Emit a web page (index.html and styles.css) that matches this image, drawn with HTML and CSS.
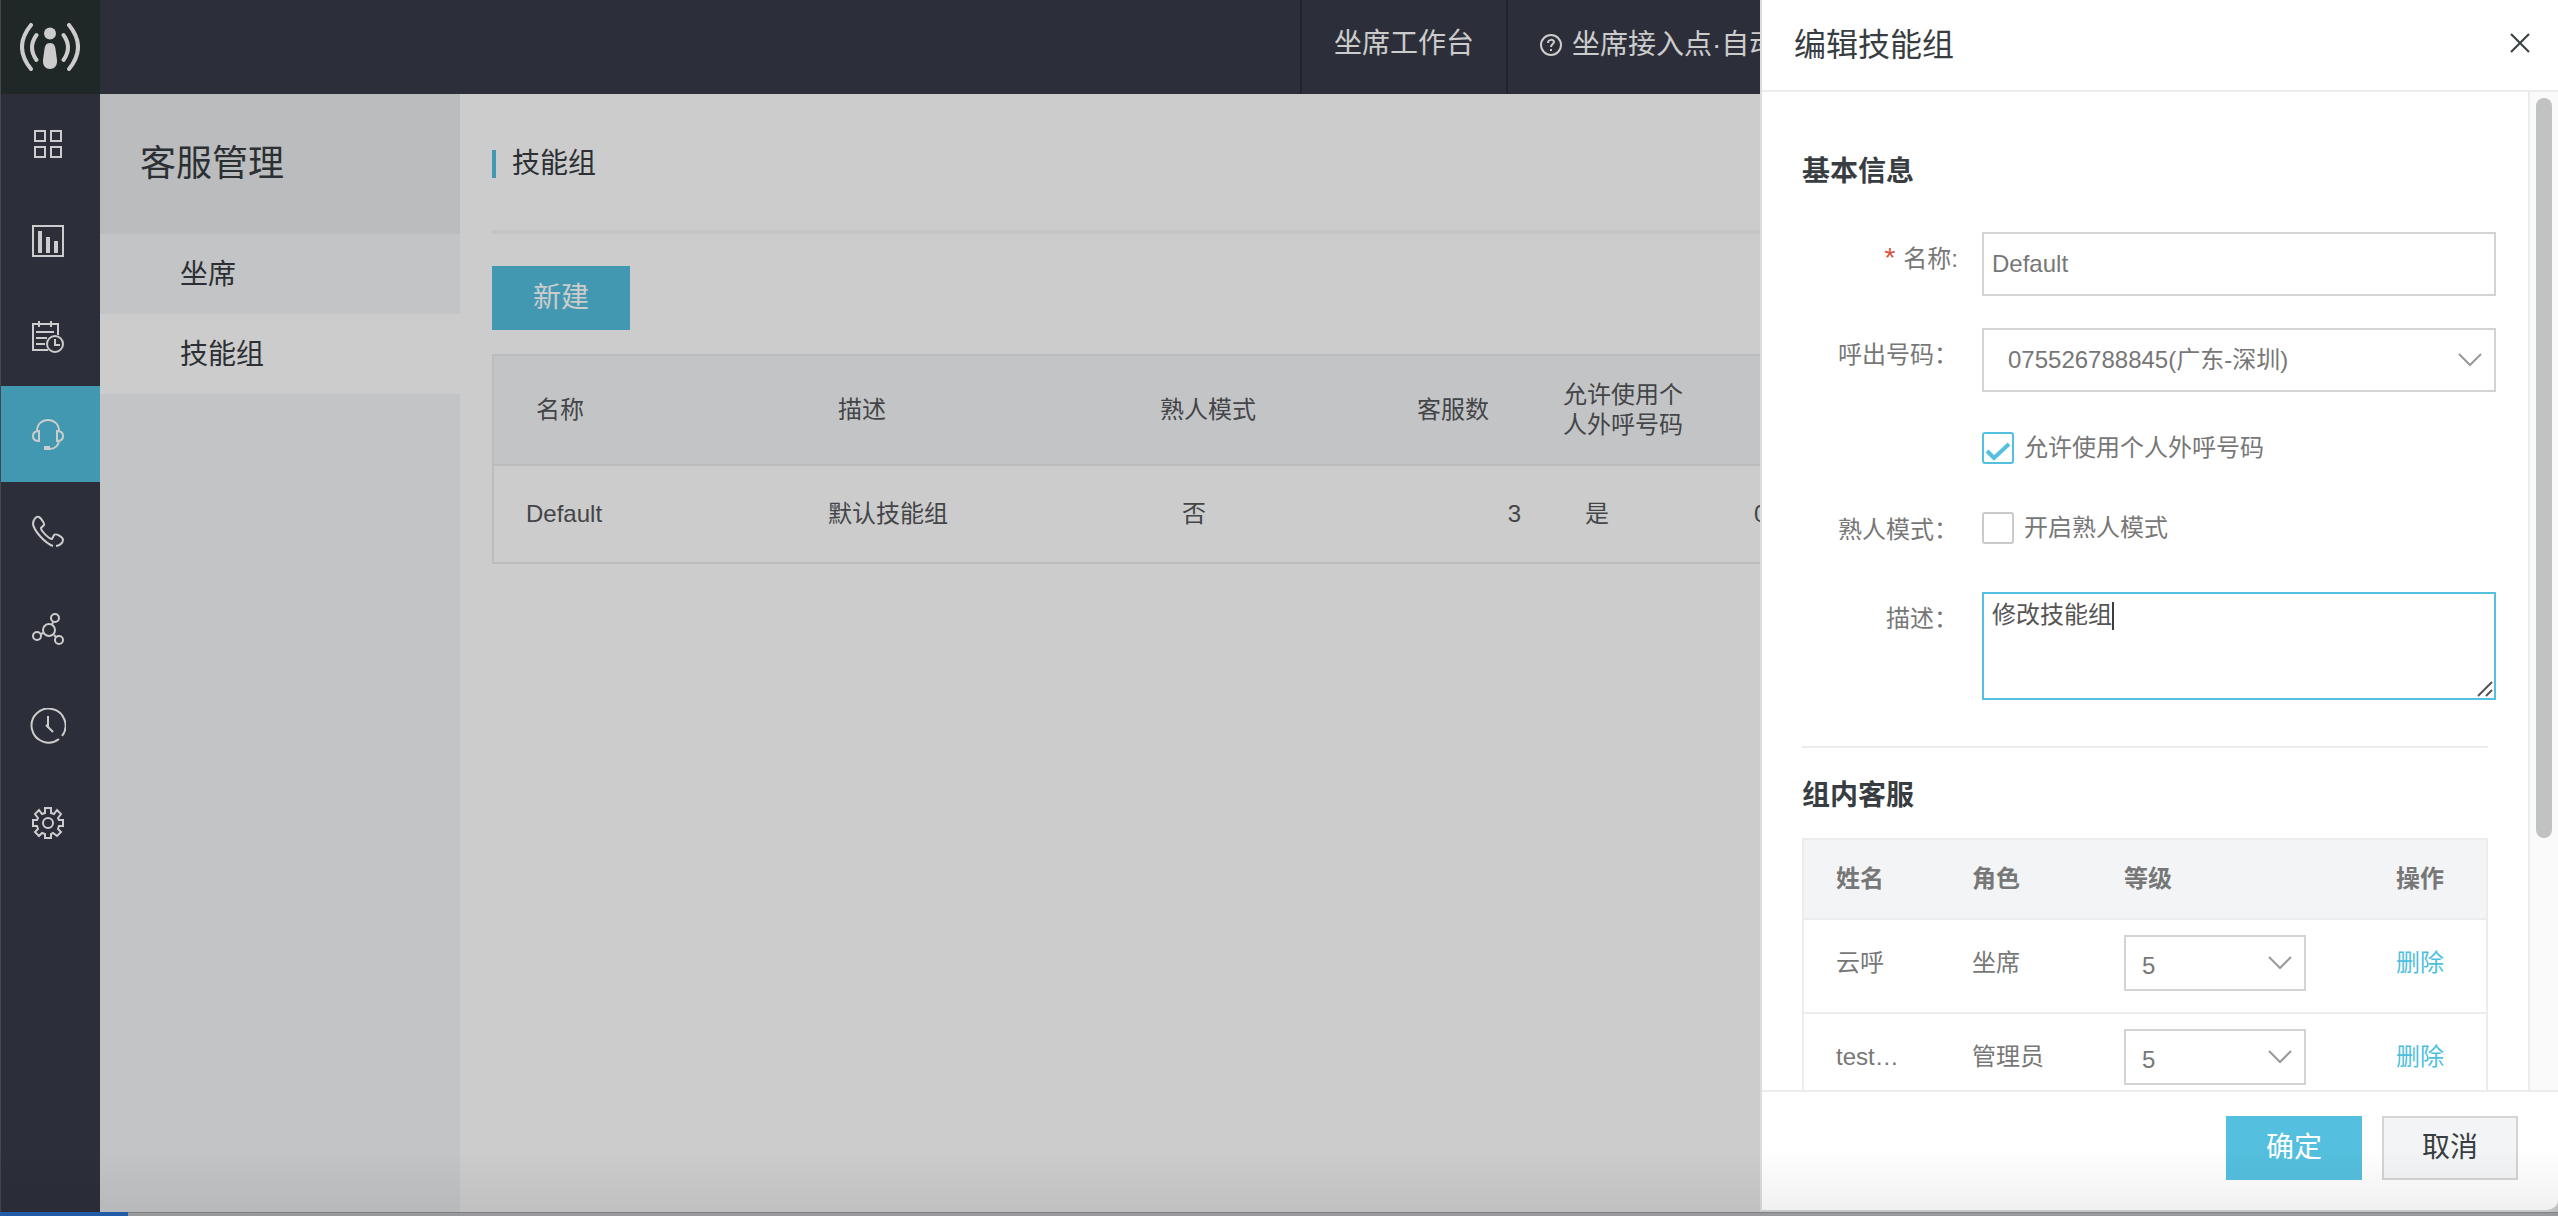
FILE: index.html
```html
<!DOCTYPE html>
<html lang="zh-CN">
<head>
<meta charset="utf-8">
<title>客服管理 - 技能组</title>
<meta name="viewport" content="width=device-width, initial-scale=1">
<link rel="stylesheet" href="styles.css">
</head>
<body>
<div class="window">
  <nav class="rail" aria-label="主导航">
    <a class="logo" href="#" aria-label="首页">
      <svg width="60" height="48" viewBox="0 0 60 48" fill="none" stroke="#fff" stroke-width="4" stroke-linecap="round">
        <path d="M11 2Q-7 24 11 46M16.500 12Q7.500 24.500 16.500 37M49 2Q67 24 49 46M43.500 12Q52.500 24.500 43.500 37"/>
        <circle cx="30" cy="10.500" r="6" fill="#fff" stroke="none"/>
        <path d="M30 20c4 0 5 3 5.500 6l1.500 11c.5 6-3 9-7 9s-7.500-3-7-9l1.500-11c.5-3 1.500-6 5.500-6z" fill="#fff" stroke="none"/>
      </svg>
    </a>
    <a class="rail-item" href="#" aria-label="概览"><svg class="icon" viewBox="0 0 36 36"><path d="M5 5h10v10H5zM21 5h10v10H21zM5 21h10v10H5zM21 21h10v10H21z"/></svg></a>
    <a class="rail-item" href="#" aria-label="报表"><svg class="icon" viewBox="0 0 36 36"><path d="M3 3h30v30H3z"/><path d="M10 8v22M18 14v16M26 18v12" stroke-width="4"/></svg></a>
    <a class="rail-item" href="#" aria-label="记录"><svg class="icon" viewBox="0 0 36 36"><path d="M18 30H3V4h25v11M9 1v6M21 1v6M6 12h18M6 18h11M6 24h9"/><circle cx="25" cy="24" r="8"/><path d="M25 19v6h5"/></svg></a>
    <a class="rail-item active" href="#" aria-label="客服管理"><svg class="icon" viewBox="0 0 36 36"><path d="M7 14C7 7 12 3 18 3s11 4 11 11M9 14v10C5 24 3 22 3 19s2-5 6-5zM27 14v10c4 0 6-2 6-5s-2-5-6-5zM29 23c0 5-4 9-9 9"/><path d="M14 31h6" stroke-width="4"/></svg></a>
    <a class="rail-item" href="#" aria-label="电话"><svg class="icon" viewBox="0 0 36 36"><path d="M23 32C15 29 4 17 3 10c0-4 3-8 6-7 2 1 6 7 5 8l-3 3c0 3 8 11 11 11l2-4c2-2 9 2 9 5s-4 6-7 6"/></svg></a>
    <a class="rail-item" href="#" aria-label="流程"><svg class="icon" viewBox="0 0 36 36"><circle cx="19" cy="19" r="6"/><circle cx="25" cy="7" r="4"/><circle cx="7" cy="25" r="4"/><circle cx="29" cy="29" r="4"/><path d="M22 14l1-3M13 22l-2 1M24 24l2 2"/></svg></a>
    <a class="rail-item" href="#" aria-label="时间"><svg class="icon" viewBox="0 0 36 36"><path d="M32 28a17 17 0 1 0-3 3M18 8v12M16 17l7 7"/></svg></a>
    <a class="rail-item" href="#" aria-label="设置"><svg class="icon" viewBox="0 0 36 36"><path d="M15 3h6v5l3 1 3-4 4 4-3 4 1 2h4v6h-4l-1 3 3 3-4 4-4-3-2 1v4h-6v-4l-3-1-3 3-4-4 3-3-1-3H3v-6h4l1-2-3-4 4-4 3 4 3-1z"/><circle cx="18" cy="18" r="5"/></svg></a>
  </nav>

  <div class="page">
    <header class="topbar">
      <a class="top-link" href="#">坐席工作台</a>
      <a class="top-link entry" href="#">
        <svg width="22" height="22" viewBox="0 0 22 22" fill="none" stroke="#fff" stroke-width="2"><circle cx="11" cy="11" r="10"/><path d="M8 9c0-4 6-4 6-1 0 2-3 2-3 5M11 15v2"/></svg>
        <span>坐席接入点·自动</span>
      </a>
    </header>
    <div class="columns">
      <aside class="submenu">
        <h1 class="submenu-title">客服管理</h1>
        <a class="submenu-item" href="#">坐席</a>
        <a class="submenu-item current" href="#">技能组</a>
      </aside>
      <main class="content">
        <h2 class="content-title">技能组</h2>
        <button class="btn primary create" type="button">新建</button>
        <table class="groups">
          <colgroup><col class="g-name"><col class="g-desc"><col class="g-mode"><col class="g-count"><col class="g-allow"><col></colgroup>
          <thead><tr><th>名称</th><th>描述</th><th class="mid">熟人模式</th><th class="num">客服数</th><th class="wrap">允许使用个人外呼号码</th><th></th></tr></thead>
          <tbody><tr><td>Default</td><td>默认技能组</td><td class="mid">否</td><td class="num">3</td><td>是</td><td>0</td></tr></tbody>
        </table>
      </main>
    </div>
  </div>

  <div class="mask"></div>

  <section class="drawer" role="dialog" aria-labelledby="drawer-title">
    <header class="drawer-head">
      <h2 class="drawer-title" id="drawer-title">编辑技能组</h2>
      <button class="close" type="button" aria-label="关闭"><svg width="20" height="20" viewBox="0 0 20 20" fill="none" stroke="#373d41" stroke-width="2"><path d="M1 1l18 18M19 1L1 19"/></svg></button>
    </header>
    <div class="drawer-body">
      <form class="form" id="group-form">
        <h3 class="section-title">基本信息</h3>
        <div class="field">
          <label class="label" for="name"><span class="required">*</span>名称:</label>
          <input class="input" id="name" type="text" value="Default">
        </div>
        <div class="field">
          <label class="label" for="number">呼出号码：</label>
          <div class="select">
            <select id="number"><option>075526788845(广东-深圳)</option></select>
            <svg class="chevron" viewBox="0 0 24 14"><path d="M1 1l11 11L23 1"/></svg>
          </div>
        </div>
        <div class="field check-field">
          <span class="label"></span>
          <label class="check"><input type="checkbox" checked><span>允许使用个人外呼号码</span></label>
        </div>
        <div class="field check-field">
          <span class="label">熟人模式：</span>
          <label class="check"><input type="checkbox"><span>开启熟人模式</span></label>
        </div>
        <div class="field area-field">
          <label class="label" for="desc">描述：</label>
          <div class="area">
            <textarea id="desc">修改技能组</textarea>
            <i class="caret"></i>
            <svg class="grip" width="16" height="16" viewBox="0 0 16 16" fill="none" stroke="#555" stroke-width="2"><path d="M1 15L15 1M9 15l6-6"/></svg>
          </div>
        </div>
        <hr class="rule">
        <h3 class="section-title">组内客服</h3>
        <table class="members">
          <colgroup><col class="m-name"><col class="m-role"><col class="m-level"><col></colgroup>
          <thead><tr><th>姓名</th><th>角色</th><th>等级</th><th>操作</th></tr></thead>
          <tbody>
            <tr><td>云呼</td><td>坐席</td><td><div class="select small"><select aria-label="云呼等级"><option>5</option></select><svg class="chevron" viewBox="0 0 24 14"><path d="M1 1l11 11L23 1"/></svg></div></td><td><a href="#">删除</a></td></tr>
            <tr><td>test…</td><td>管理员</td><td><div class="select small"><select aria-label="test等级"><option>5</option></select><svg class="chevron" viewBox="0 0 24 14"><path d="M1 1l11 11L23 1"/></svg></div></td><td><a href="#">删除</a></td></tr>
          </tbody>
        </table>
      </form>
      <div class="track"><div class="thumb"></div></div>
    </div>
    <footer class="drawer-foot">
      <button class="btn primary" type="submit" form="group-form">确定</button>
      <button class="btn" type="button">取消</button>
    </footer>
  </section>
  <div class="shade"></div>
</div>
<div class="desktop-edge"><span class="desktop-blue"></span></div>
</body>
</html>
```
FILE: styles.css
```css
* { box-sizing: border-box; }

body {
  margin: 0;
  height: 100vh;
  overflow: hidden;
  display: flex;
  flex-direction: column;
  background: #98999c;
  color: #373d41;
  font: 24px/30px "Liberation Sans", "Noto Sans CJK SC", sans-serif;
}

a { text-decoration: none; color: inherit; }
h1, h2, h3 { margin: 0; font-weight: 400; }
button, input, select, textarea { font: inherit; color: inherit; margin: 0; border-radius: 0; }
table { border-collapse: collapse; table-layout: fixed; text-align: left; }
th { font-weight: 400; }

.window {
  position: relative;
  flex: 1;
  min-height: 0;
  display: flex;
  overflow: hidden;
  background: #fff;
}

.desktop-edge { height: 4px; flex: none; border-top: 1px solid #808184; }
.desktop-blue { display: block; width: 5%; height: 4px; margin-top: -1px; background: #225ba8; }

/* Icon rail */
.rail {
  width: 100px;
  flex: none;
  display: flex;
  flex-direction: column;
  gap: 1px;
  background: #373a49;
  border-left: 1px solid #555864;
}
.logo { height: 94px; display: grid; place-items: center; padding-right: 2px; background: #293231; }
.rail-item { height: 96px; display: grid; place-items: center; padding: 1px 6px 0 0; }
.rail-item.active { background: #54bfde; }
.icon { width: 36px; height: 36px; fill: none; stroke: #fff; stroke-width: 2; }

/* Page frame */
.page { flex: 1; min-width: 0; display: flex; flex-direction: column; }
.topbar {
  height: 94px;
  flex: none;
  display: flex;
  justify-content: flex-end;
  background: #373a49;
  color: #fff;
  font-size: 28px;
  line-height: 40px;
}
.top-link { padding: 24px 32px; border-left: 2px solid #2c2e3a; white-space: nowrap; }
.entry { width: 1052px; display: flex; align-items: center; gap: 10px; padding: 0 32px 4px; }

.columns { flex: 1; min-height: 0; display: flex; }
.submenu { width: 360px; flex: none; background: #f4f5f7; }
.submenu-title { height: 140px; padding-left: 40px; background: #eaecee; font-size: 36px; line-height: 140px; }
.submenu-item { display: block; padding: 2px 0 0 80px; font-size: 28px; line-height: 78px; }
.submenu-item.current { background: #fff; }

.content { flex: 1; min-width: 0; padding: 56px 32px; }
.content-title {
  display: flex;
  align-items: center;
  gap: 16px;
  padding-bottom: 52px;
  margin-bottom: 32px;
  border-bottom: 4px solid #f4f5f7;
  font-size: 28px;
  line-height: 28px;
}
.content-title::before { content: ""; width: 4px; height: 28px; background: #54bfde; }

.btn {
  min-width: 136px;
  height: 64px;
  padding: 0 38px;
  border: 2px solid #d2d4d5;
  background: #f3f4f6;
  font-size: 28px;
}
.btn.primary { border-color: #54bfde; background: #54bfde; color: #fff; }
.create { min-width: 138px; }

.groups { width: 100%; margin-top: 24px; border: 2px solid #eaecee; color: #54575a; }
.groups tr { border-bottom: 2px solid #eaecee; }
.groups thead { background: #f4f5f7; }
.groups th { height: 110px; padding: 0 44px; }
.groups td { height: 98px; padding: 0 34px; }
.groups th:first-child { padding-left: 42px; }
.groups td:first-child { padding-left: 32px; }
.g-name { width: 301px; }
.g-desc { width: 299px; }
.g-mode { width: 230px; }
.g-count { width: 228px; }
.g-allow { width: 169px; }
.groups .mid { text-align: center; padding: 0; }
.groups td.mid { padding-right: 28px; }
.groups .num { text-align: right; padding-right: 30px; }
.groups th.num { padding-right: 62px; }
.groups .wrap { padding: 0 24px 0 12px; }

/* Layers over the page */
.mask { position: absolute; inset: 0; background: rgba(0, 0, 0, 0.2); }
.shade {
  position: absolute;
  inset: auto 0 0 0;
  height: 64px;
  background: linear-gradient(rgba(0, 0, 0, 0), rgba(0, 0, 0, 0.06));
  pointer-events: none;
}
.drawer {
  position: absolute;
  inset: 0 0 0 auto;
  width: 798px;
  display: flex;
  flex-direction: column;
  background: #fff;
  border-left: 2px solid #dcddde;
  border-bottom: 2px solid #d2d4d5;
  border-bottom-right-radius: 12px;
}
.drawer-head {
  height: 92px;
  flex: none;
  display: flex;
  align-items: center;
  justify-content: space-between;
  padding: 0 28px 4px 32px;
  border-bottom: 2px solid #ebecec;
}
.drawer-title { padding-top: 4px; font-size: 32px; }
.close { padding: 0; border: 0; background: none; display: flex; }

.drawer-body { flex: 1; min-height: 0; display: flex; overflow: hidden; }
.form { flex: 1; padding: 62px 40px 0; color: #777; }
.section-title { color: #373d41; font-size: 28px; font-weight: 700; line-height: 36px; }

.field { display: flex; gap: 24px; margin: 32px -8px 0 0; }
.section-title + .field { margin-top: 42px; }
.label { width: 156px; flex: none; padding-top: 12px; text-align: right; white-space: nowrap; }
.required { margin-right: 8px; color: #d9503c; font-size: 28px; line-height: 28px; }
.input { flex: 1; min-width: 0; height: 64px; padding: 0 8px; border: 2px solid #d2d4d5; background: #fff; }

.select { flex: 1; display: grid; align-items: center; }
.select > * { grid-area: 1 / 1; }
.select select { width: 100%; height: 64px; padding: 0 24px; border: 2px solid #d2d4d5; background: #fff; appearance: none; }
.chevron { justify-self: end; width: 24px; height: 14px; margin-right: 14px; fill: none; stroke: #999; stroke-width: 2; pointer-events: none; }

.check-field { height: 48px; align-items: center; }
.check-field .label { padding: 4px 0 0; }
.check { display: flex; align-items: center; gap: 10px; }
.check input { appearance: none; width: 32px; height: 32px; border: 2px solid #c9cacc; border-radius: 3px; background: #fff; }
.check input:checked {
  border-color: #54bfde;
  background: url("data:image/svg+xml,%3Csvg xmlns='http://www.w3.org/2000/svg' viewBox='0 0 28 28'%3E%3Cpath d='M3 17l7 7L25 10' fill='none' stroke='%2354bfde' stroke-width='4'/%3E%3C/svg%3E") center / 28px 28px no-repeat;
}

.area-field { margin-top: 40px; }
.area { position: relative; flex: 1; display: flex; }
.area textarea { width: 100%; height: 108px; padding: 6px 8px; border: 2px solid #54bfde; background: #fff; color: #555; resize: none; outline: 0; }
.caret { position: absolute; left: 130px; top: 10px; width: 2px; height: 28px; background: #373d41; }
.grip { position: absolute; right: 3px; bottom: 3px; }

.rule { margin: 46px 0 30px; border: 0; border-top: 2px solid #ebecec; }

.members { width: 100%; margin-top: 24px; border: 2px solid #ebecec; }
.members tr { border-bottom: 2px solid #ebecec; }
.members thead { background: #f3f4f6; }
.members th { height: 80px; padding: 0 0 0 32px; font-weight: 700; }
.members td { height: 94px; padding: 0 0 6px 32px; }
.m-name { width: 137px; }
.m-role { width: 152px; }
.m-level { width: 272px; }
.members a { color: #4dbfde; }
.small { width: 182px; }
.small select { height: 56px; padding: 6px 16px 0; }

.track { width: 30px; flex: none; padding: 6px; border-left: 2px solid #ebecec; background: #fafafb; }
.thumb { width: 16px; height: 75%; border-radius: 8px; background: #c1c2c4; }

.drawer-foot {
  height: 120px;
  flex: none;
  display: flex;
  justify-content: flex-end;
  gap: 20px;
  padding: 24px 40px 0;
  border-top: 2px solid #ebecec;
}
```
